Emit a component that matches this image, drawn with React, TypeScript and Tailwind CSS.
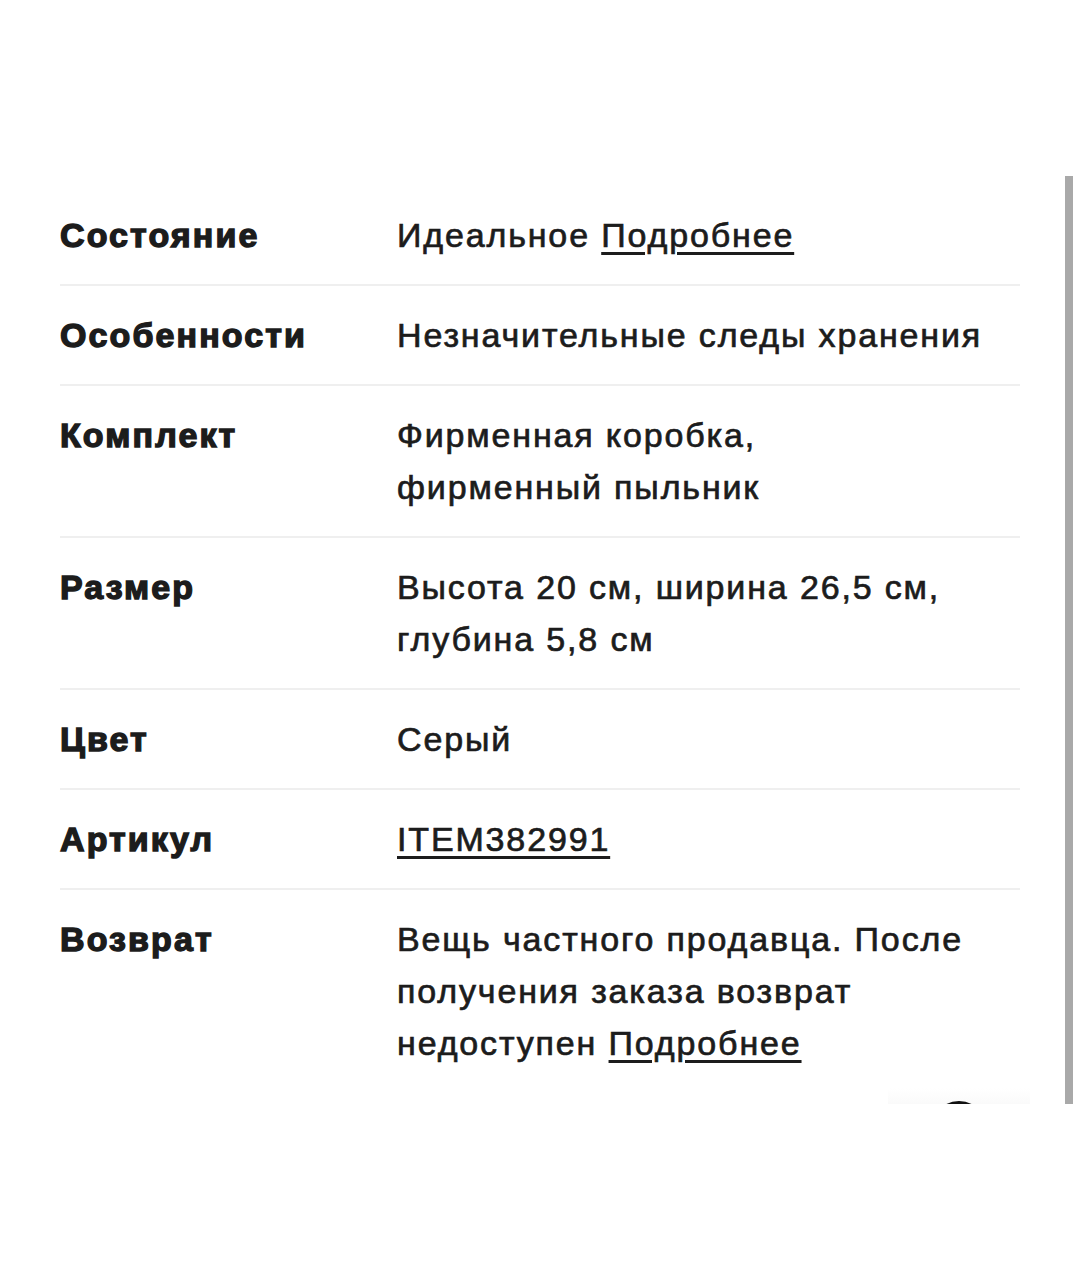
const ROWS: { label: string; value: React.ReactNode }[] = [
  {
    label: 'Состояние',
    value: (
      <>
        Идеальное <a className="underline decoration-[3px] underline-offset-[5px]">Подробнее</a>
      </>
    ),
  },
  { label: 'Особенности', value: 'Незначительные следы хранения' },
  {
    label: 'Комплект',
    value: (
      <>
        Фирменная коробка,
        <br />
        фирменный пыльник
      </>
    ),
  },
  {
    label: 'Размер',
    value: (
      <>
        Высота 20 см, ширина 26,5 см,
        <br />
        глубина 5,8 см
      </>
    ),
  },
  { label: 'Цвет', value: 'Серый' },
  {
    label: 'Артикул',
    value: <a className="underline decoration-[3px] underline-offset-[5px]">ITEM382991</a>,
  },
  {
    label: 'Возврат',
    value: (
      <>
        Вещь частного продавца. После
        <br />
        получения заказа возврат
        <br />
        недоступен <a className="underline decoration-[3px] underline-offset-[5px]">Подробнее</a>
      </>
    ),
  },
]

const App = () => {
  return (
    <div className="w-[1080px] h-[1280px] bg-white font-['Liberation_Sans','Noto_Sans',sans-serif] text-[#1c1c1c]">
      <div className="h-[176px]" />
      <div className="relative h-[928px] overflow-hidden">
        {/* список характеристик */}
        <div className="pl-[60px] pr-[60px] pt-[10px]">
          {ROWS.map((row, i) => (
            <div
              key={row.label}
              className={`flex pt-[23px] pb-[23px] ${i < ROWS.length - 1 ? 'border-b-2 border-[#efefef]' : ''}`}
            >
              <div className="w-[337px] shrink-0 text-[34px] leading-[52px] font-bold tracking-[2.1px] [-webkit-text-stroke:1.4px_#1c1c1c]">
                {row.label}
              </div>
              <div className="flex-1 text-[34px] leading-[52px] tracking-[1.85px] [-webkit-text-stroke:0.7px_#1c1c1c]">
                {row.value}
              </div>
            </div>
          ))}
        </div>

        {/* полоса прокрутки */}
        <div className="absolute right-[7px] top-0 bottom-0 w-[8px] bg-[#a9a9a9]" />

        {/* кнопка снизу, обрезана */}
        <div className="absolute left-[888px] w-[142px] top-[912px] h-[16px] bg-gradient-to-b from-transparent to-[#fafafa]" />
        <div className="absolute left-[932px] top-[925px] w-[54px] h-[54px] rounded-full border-[3px] border-[#111] bg-white" />
      </div>
    </div>
  )
}

export default App
